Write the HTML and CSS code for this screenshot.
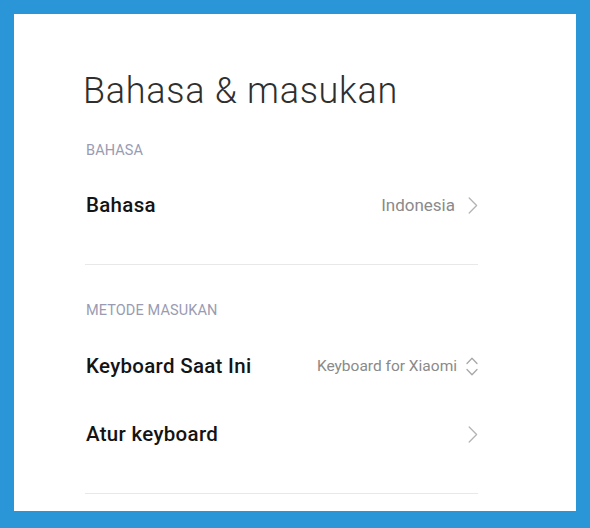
FILE: index.html
```html
<!DOCTYPE html>
<html lang="id">
<head>
<meta charset="utf-8">
<title>Bahasa &amp; masukan</title>
<link rel="stylesheet" href="styles.css">
</head>
<body>
<div class="card">
  <h1 class="title">Bahasa &amp; masukan</h1>

  <div class="section-label label-first">BAHASA</div>
  <div class="row">
    <span class="row-title">Bahasa</span>
    <span class="row-value">
      <span class="value-text">Indonesia</span>
      <svg class="chev" width="10" height="17" viewBox="0 0 10 17"><path d="M1.2 1 L8.6 8.5 L1.2 16" fill="none" stroke="#b4b4b4" stroke-width="1.3" stroke-linecap="round" stroke-linejoin="round"/></svg>
    </span>
  </div>
  <div class="divider"></div>

  <div class="section-label label-second">METODE MASUKAN</div>
  <div class="row">
    <span class="row-title">Keyboard Saat Ini</span>
    <span class="row-value">
      <span class="value-text small">Keyboard for Xiaomi</span>
      <svg class="updown" width="12" height="19" viewBox="0 0 12 19"><path d="M1 6.5 L6 1.2 L11 6.5 M1 12.5 L6 17.8 L11 12.5" fill="none" stroke="#a8a8a8" stroke-width="1.3" stroke-linecap="round" stroke-linejoin="round"/></svg>
    </span>
  </div>
  <div class="row">
    <span class="row-title">Atur keyboard</span>
    <span class="row-value">
      <svg class="chev" width="10" height="17" viewBox="0 0 10 17"><path d="M1.2 1 L8.6 8.5 L1.2 16" fill="none" stroke="#b4b4b4" stroke-width="1.3" stroke-linecap="round" stroke-linejoin="round"/></svg>
    </span>
  </div>
  <div class="divider"></div>
</div>
</body>
</html>
```
FILE: styles.css
```css
html, body {
  margin: 0;
  padding: 0;
}
body {
  background: #2a95d7;
  width: 590px;
  height: 528px;
  overflow: hidden;
  font-family: Roboto, "Noto Sans", "Liberation Sans", sans-serif;
}
.card {
  margin: 14px 14px 0 14px;
  height: 497px;
  box-sizing: border-box;
  background: #ffffff;
  padding: 57px 98px 0 70px;
  overflow: hidden;
}
.title {
  margin: 0 0 0 -1px;
  font-size: 36px;
  line-height: 40px;
  font-weight: 300;
  color: #2f2f2f;
  letter-spacing: 0.7px;
}
.section-label {
  font-size: 14.5px;
  line-height: 20px;
  color: #9a9bb2;
  padding-left: 2px;
  letter-spacing: 0.1px;
}
.label-first {
  margin-top: 30px;
}
.label-second {
  margin-top: 36px;
}
.row {
  height: 68px;
  display: flex;
  align-items: center;
  justify-content: space-between;
  padding-left: 2px;
}
.row-title {
  font-size: 20.5px;
  line-height: 24px;
  font-weight: 500;
  color: #141414;
  letter-spacing: 0.3px;
}
.row-value {
  display: flex;
  align-items: center;
}
.value-text {
  font-size: 17px;
  line-height: 24px;
  color: #8a8a8a;
  margin-right: 13px;
}
.value-text.small {
  font-size: 15.5px;
  margin-right: 9px;
}
.chev {
  display: block;
}
.updown {
  display: block;
}
.divider {
  height: 1px;
  background: #e8e8e8;
  margin-top: 25px;
  margin-left: 1px;
}
.label-first + .row {
  margin-top: 10px;
}
.label-second + .row {
  margin-top: 11px;
}
```
